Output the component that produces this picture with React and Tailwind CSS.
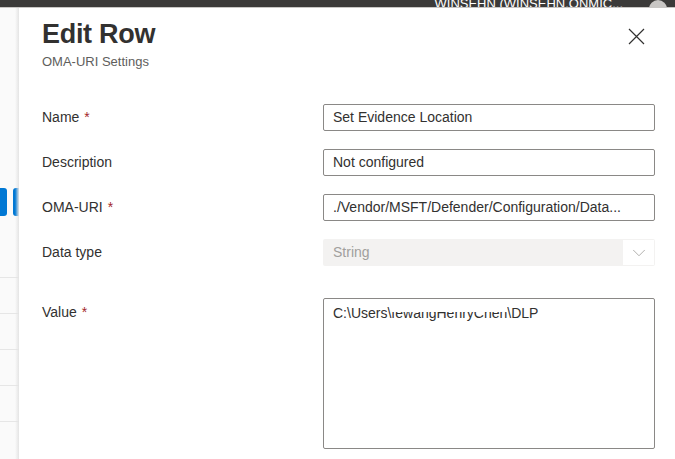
import { ChevronDown } from "lucide-react";

const font = { fontFamily: '"Segoe UI", "Liberation Sans", Arial, sans-serif' };

const fields = [
  { label: "Name", required: true, value: "Set Evidence Location" },
  { label: "Description", required: false, value: "Not configured" },
  { label: "OMA-URI", required: true, value: "./Vendor/MSFT/Defender/Configuration/Data..." },
];

function Label({ text, required }) {
  return (
    <div className="text-[14px] text-[#323130]">
      {text}
      {required && <span className="ml-[5px] text-[#a4262c]">*</span>}
    </div>
  );
}

function CloseIcon() {
  return (
    <svg width="17" height="17" viewBox="0 0 17 17" fill="none" stroke="#323130" strokeWidth="1.2">
      <path d="M1 1 L16 16 M16 1 L1 16" />
    </svg>
  );
}

export default function App() {
  return (
    <div className="w-[675px] h-[459px] overflow-hidden flex flex-col bg-white" style={font}>
      {/* top bar of the portal, mostly cut off */}
      <div className="h-[8px] bg-[#3b3a39] border-b border-[#c8c6c4] overflow-hidden flex justify-end items-end pr-[8px] gap-[26px] shrink-0">
        <span className="text-white text-[13px] leading-none translate-y-[3px]">WINSEHN (WINSEHN.ONMIC...</span>
        <span className="w-[18px] h-[18px] rounded-full bg-[#c8c6c4] translate-y-[11px]" />
      </div>

      <div className="flex flex-1 min-h-0">
        {/* sliver of the page behind the blade */}
        <div className="w-[19px] shrink-0 bg-[#fafafa] flex flex-col relative">
          <div className="h-[180px]" />
          <div className="flex gap-[6px] h-[28px]">
            <div className="w-[7px] bg-[#0078d4] rounded-r-[3px]" />
            <div className="w-[6px] bg-[#0078d4] rounded-l-[3px]" />
          </div>
          <div className="h-[61px]" />
          {[0, 1, 2, 3, 4].map((i) => (
            <div key={i} className="h-[36px] border-t border-[#e6e6e6]" />
          ))}
          <div className="absolute top-0 right-0 bottom-0 w-[4px] bg-gradient-to-r from-transparent to-[#e4e4e4]" />
        </div>

        {/* blade */}
        <div className="flex-1 pl-[23px] pr-[20px] pt-[8px]">
          <div className="flex justify-between items-start">
            <div>
              <h1 className="text-[27px] font-semibold text-[#323130] leading-[36px] tracking-[-0.3px]">Edit Row</h1>
              <div className="text-[13px] text-[#605e5c] leading-[18px] mt-[1px]">OMA-URI Settings</div>
            </div>
            <div className="mt-[12px] mr-[10px]">
              <CloseIcon />
            </div>
          </div>

          <div className="mt-[33px] flex flex-col gap-[18px]">
            {fields.map((f) => (
              <div key={f.label} className="grid grid-cols-[281px_1fr] items-center">
                <Label text={f.label} required={f.required} />
                <div className="h-[27px] border border-[#8a8886] rounded-[2px] px-[9px] flex items-center text-[14px] text-[#323130] whitespace-nowrap overflow-hidden">
                  {f.value}
                </div>
              </div>
            ))}

            <div className="grid grid-cols-[281px_1fr] items-center">
              <Label text="Data type" />
              <div className="h-[27px] bg-[#f3f2f1] rounded-[2px] pl-[10px] pr-[1px] flex items-center justify-between text-[14px] text-[#a19f9d]">
                <span>String</span>
                <span className="w-[31px] h-[25px] bg-white flex items-center justify-center">
                  <ChevronDown size={22} strokeWidth={0.9} color="#a19f9d" />
                </span>
              </div>
            </div>

            <div className="grid grid-cols-[281px_1fr] items-start mt-[14px]">
              <div className="pt-[4px]">
                <Label text="Value" required />
              </div>
              <div className="h-[151px] border border-[#8a8886] rounded-[2px] px-[9px] pt-[4px] text-[14px] text-[#323130]">
                C:\Users\
                <span className="relative inline-block">
                  fewangHenryChen
                  <span className="absolute left-0 right-0 top-0 h-[9px] bg-white" />
                </span>
                \DLP
              </div>
            </div>
          </div>
        </div>
      </div>
    </div>
  );
}
